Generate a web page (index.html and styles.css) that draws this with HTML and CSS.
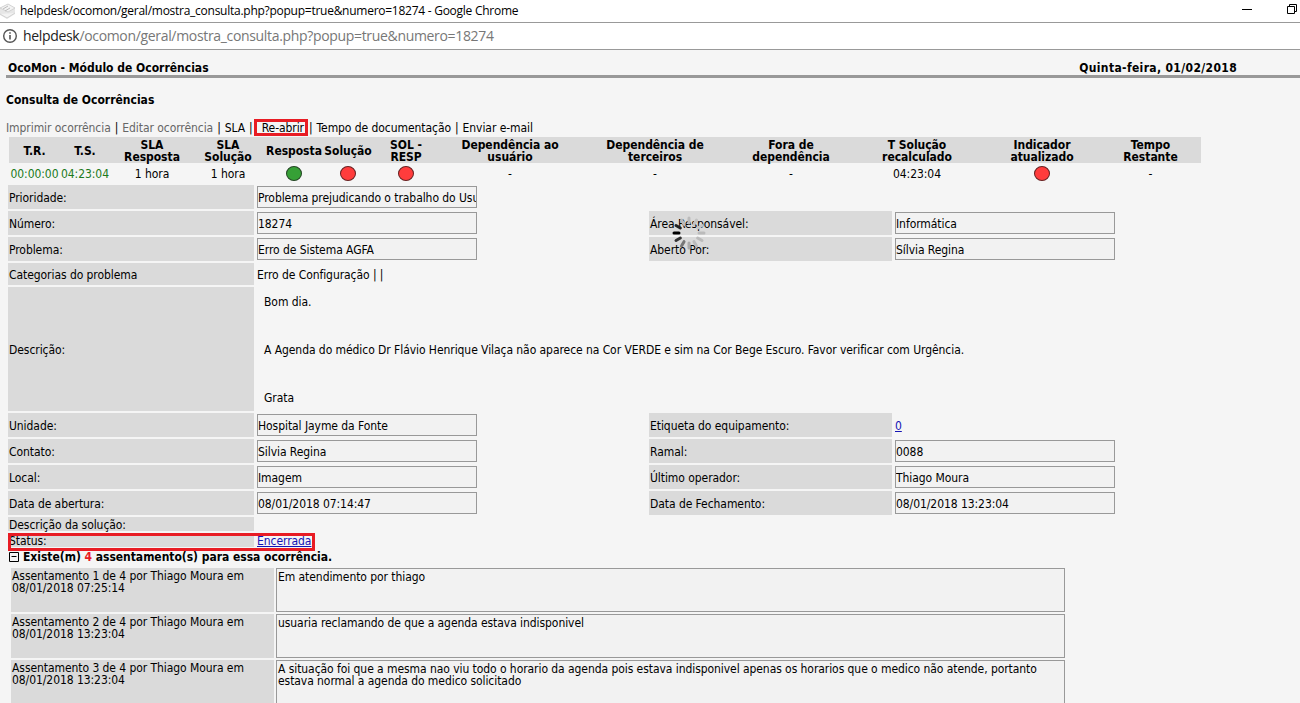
FILE: index.html
```html
<!DOCTYPE html>
<html lang="pt-BR">
<head>
<meta charset="utf-8">
<title>helpdesk/ocomon/geral/mostra_consulta.php</title>
<link rel="stylesheet" href="styles.css">
</head>
<body>
<header class="titlebar">
  <svg class="favicon" width="16" height="18" viewBox="0 0 16 18"><path d="M0 6 8 2l7 4v6l-8 5-7-4z" fill="#e6e6e6"/><path d="m0 6 8-4 7 4-7 4zM0 12l7 4 8-5" fill="#f3f3f3" stroke="#ccc" stroke-width=".8"/><path d="m3 7 5-3m-3 5 5-3" stroke="#bbb"/></svg>
  <span class="window-title">helpdesk/ocomon/geral/mostra_consulta.php?popup=true&amp;numero=18274 - Google Chrome</span>
  <svg class="window-buttons" width="60" height="22" viewBox="0 0 60 22" fill="none" stroke="#000"><path d="M2 9.500h10M47.500 6.500h7v7h-7zM49.500 6.500v-2h7v7h-2"/></svg>
</header>
<div class="addressbar">
  <svg width="16" height="16" viewBox="0 0 16 16" fill="none" stroke="#555" stroke-width="1.400"><circle cx="8" cy="8" r="6.300"/><path d="M8 7v4.500M8 4.300v1.500" stroke-width="1.600"/></svg>
  <span class="url"><b>helpdesk</b>/ocomon/geral/mostra_consulta.php?popup=true&amp;numero=18274</span>
</div>
<main class="page">
  <div class="module"><span>OcoMon - Módulo de Ocorrências</span><span class="date">Quinta-feira, 01/02/2018</span></div>
  <h1 class="heading">Consulta de Ocorrências</h1>
  <nav class="menu"><span class="muted">Imprimir ocorrência</span><i>|</i><span class="muted">Editar ocorrência</span><i>|</i><span>SLA</span><i>|</i><span class="reopen">Re-abrir</span><i>|</i><span>Tempo de documentação</span><i>|</i><span>Enviar e-mail</span></nav>

  <div class="sla sla-head">
    <span>T.R.</span><span>T.S.</span><span>SLA<br>Resposta</span><span>SLA<br>Solução</span><span>Resposta</span><span>Solução</span><span>SOL -<br>RESP</span><span>Dependência ao<br>usuário</span><span>Dependência de<br>terceiros</span><span>Fora de<br>dependência</span><span>T Solução<br>recalculado</span><span>Indicador<br>atualizado</span><span>Tempo<br>Restante</span>
  </div>
  <div class="sla sla-values">
    <span class="ok">00:00:00</span><span class="ok">04:23:04</span><span>1 hora</span><span>1 hora</span><span class="dot green"></span><span class="dot"></span><span class="dot"></span><span>-</span><span>-</span><span>-</span><span>04:23:04</span><span class="dot"></span><span>-</span>
  </div>

  <section class="details">
    <div class="row"><label>Prioridade:</label><div class="field">Problema prejudicando o trabalho do Usuário</div></div>
    <div class="row"><label>Número:</label><div class="field">18274</div><label class="second">Área Responsável:</label><div class="field">Informática</div>
      <svg class="spinner" width="36" height="36" viewBox="-18 -18 36 36" stroke-width="3" stroke-linecap="round">
        <path d="M-15 0h-0h5" stroke="#000"/><path d="M-15 0h5" stroke="#222" transform="rotate(30)"/><path d="M-15 0h5" stroke="#bbb" transform="rotate(60)"/><path d="M-15 0h5" stroke="#bbb" transform="rotate(90)"/><path d="M-15 0h5" stroke="#c2c2c2" transform="rotate(120)"/><path d="M-15 0h5" stroke="#c6c6c6" transform="rotate(150)"/><path d="M-15 0h5" stroke="#bbb" transform="rotate(180)"/><path d="M-15 0h5" stroke="#bbb" transform="rotate(210)"/><path d="M-15 0h5" stroke="#bbb" transform="rotate(240)"/><path d="M-15 0h5" stroke="#aaa" transform="rotate(270)"/><path d="M-15 0h5" stroke="#777" transform="rotate(300)"/><path d="M-15 0h5" stroke="#333" transform="rotate(330)"/>
      </svg></div>
    <div class="row"><label>Problema:</label><div class="field">Erro de Sistema AGFA</div><label class="second">Aberto Por:</label><div class="field">Sílvia Regina</div></div>
    <div class="row category"><label>Categorias do problema</label><div class="plain">Erro de Configuração | |</div></div>
    <div class="row description"><label>Descrição:</label><div class="message"><p>Bom dia.</p><p>A Agenda do médico Dr Flávio Henrique Vilaça não aparece na Cor VERDE e sim na Cor Bege Escuro. Favor verificar com Urgência.</p><p>Grata</p></div></div>
    <div class="row"><label>Unidade:</label><div class="field">Hospital Jayme da Fonte</div><label class="second">Etiqueta do equipamento:</label><div class="plain"><a>0</a></div></div>
    <div class="row"><label>Contato:</label><div class="field">Silvia Regina</div><label class="second">Ramal:</label><div class="field">0088</div></div>
    <div class="row"><label>Local:</label><div class="field">Imagem</div><label class="second">Último operador:</label><div class="field">Thiago Moura</div></div>
    <div class="row"><label>Data de abertura:</label><div class="field">08/01/2018 07:14:47</div><label class="second">Data de Fechamento:</label><div class="field">08/01/2018 13:23:04</div></div>
    <div class="row short"><label>Descrição da solução:</label></div>
    <div class="row short status"><label>Status:</label><div class="plain"><a>Encerrada</a></div></div>
  </section>

  <h2 class="notes-title"><svg width="10" height="10" viewBox="0 0 10 10" fill="none" stroke="#000"><path d="M.5.5h9v9h-9zM2.500 4.500h5"/></svg><span>Existe(m) <em>4</em> assentamento(s) para essa ocorrência.</span></h2>
  <section class="notes">
    <div class="note"><div class="who">Assentamento 1 de 4 por Thiago Moura em<br>08/01/2018 07:25:14</div><div class="text">Em atendimento por thiago</div></div>
    <div class="note"><div class="who">Assentamento 2 de 4 por Thiago Moura em<br>08/01/2018 13:23:04</div><div class="text">usuaria reclamando de que a agenda estava indisponivel</div></div>
    <div class="note"><div class="who">Assentamento 3 de 4 por Thiago Moura em<br>08/01/2018 13:23:04</div><div class="text">A situação foi que a mesma nao viu todo o horario da agenda pois estava indisponivel apenas os horarios que o medico não atende, portanto<br>estava normal a agenda do medico solicitado</div></div>
  </section>
</main>
</body>
</html>
```
FILE: styles.css
```css
*, *::after { box-sizing: border-box; }
body {
  margin: 0;
  height: 703px;
  overflow: hidden;
  background: #f5f5f5;
  color: #000;
  font: 12px/12px "DejaVu Sans Condensed", "DejaVu Sans", sans-serif;
  letter-spacing: -0.065px;
  white-space: nowrap;
}
.titlebar, .addressbar {
  display: flex;
  align-items: center;
  background: #fff;
  border-bottom: 1px solid #999;
  font-family: "Open Sans", "Noto Sans", sans-serif;
}
.titlebar { height: 23px; letter-spacing: -0.26px; }
.window-title { margin-left: 4px; }
.window-buttons { margin-left: auto; }
.addressbar { height: 27px; padding-left: 2px; font-size: 14px; letter-spacing: -0.33px; color: #777; }
.url { margin-left: 5px; }
.url b { color: #222; font-weight: normal; }

.page { padding-left: 6px; }
.module {
  display: flex;
  justify-content: space-between;
  height: 28px;
  padding: 12px 63px 0 2px;
  border-bottom: 3px solid #999;
  font-weight: bold;
  letter-spacing: 0;
}
.date { letter-spacing: 0.35px; }
.heading { margin: 16px 0 0; font-size: 12px; line-height: 12px; letter-spacing: 0; }
.menu { display: flex; height: 31px; padding-top: 16px; gap: 4px; }
.menu i { font-style: normal; }
.menu .muted { color: #666; }
.reopen {
  height: 17px;
  margin: -3px -3px 0;
  padding: 0 1px 0 5px;
  border: 3px solid #e81c24;
}

.sla {
  display: grid;
  grid-template-columns: 51px 50px 84px 68px 64px 44px 72px 136px 154px 118px 134px 116px 101px;
  align-items: center;
  justify-items: center;
  width: 1192px;
  margin-left: 3px;
  text-align: center;
}
.sla-head { height: 26px; padding-top: 1px; background: #dadada; font-weight: bold; letter-spacing: -0.04px; }
.sla-values { height: 22px; }
.ok { color: #1b7a1b; }
.dot { width: 16px; height: 15px; margin-bottom: 1px; border: 1px solid #622; border-radius: 50%; background: #ff3c3c; }
.dot.green { background: #36a036; border-color: #254525; }

.details { display: grid; gap: 2px; padding-left: 2px; }
.row {
  position: relative;
  display: grid;
  grid-template-columns: 246px 220px 166px 243px 220px;
  column-gap: 3px;
  align-items: center;
  height: 24px;
}
.row label {
  display: flex;
  align-items: center;
  height: 100%;
  padding: 2px 0 0 1px;
  background: #dadada;
}
.row .second { grid-column: 4; }
.plain { padding-top: 2px; }
.field {
  height: 22px;
  border: 1px solid #999;
  background: #f2f2f2;
  line-height: 22px;
  overflow: hidden;
}
.category { height: 22px; }
.description { height: 124px; }
.message { display: grid; gap: 36px; padding: 2px 0 0 7px; }
.message p { margin: 0; }
.short { height: 14px; }
.status::after {
  content: "";
  position: absolute;
  left: 0;
  top: 0;
  width: 307px;
  height: 18px;
  border: 3px solid #e81c24;
}
a { color: #1414b4; text-decoration: underline; }
.spinner { position: absolute; z-index: 1; left: 663px; top: 4px; }

.notes-title { display: flex; align-items: center; gap: 4px; height: 21px; margin: 0; padding: 0 0 2px 3px; font-size: 12px; letter-spacing: -0.03px; }
.notes-title em { font-style: normal; color: #e81c24; }
.notes { display: grid; gap: 2px; padding-left: 5px; }
.note { display: grid; grid-template-columns: 263px 789px; gap: 2px; height: 44px; }
.who { padding: 2px 1px; background: #dadada; }
.text { padding: 2px 1px; border: 1px solid #999; background: #f2f2f2; }
```
